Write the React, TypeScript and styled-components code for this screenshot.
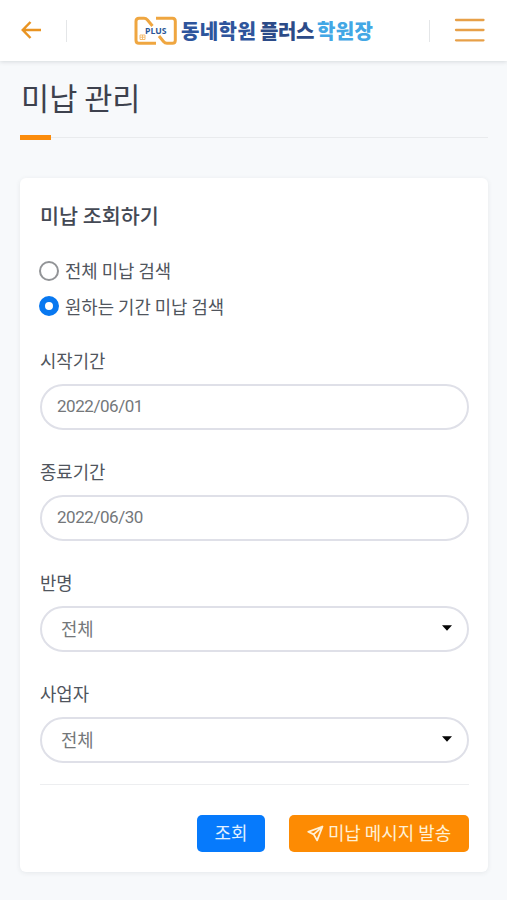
import React from "react";
import styled, { createGlobalStyle } from "styled-components";

const GlobalStyle = createGlobalStyle`
  *, *::before, *::after { box-sizing: border-box; }
  body {
    margin: 0;
    background: #f7f9fb;
    color: #50555d;
    font-family: "Noto Sans CJK KR", sans-serif;
    font-size: 17.8px;
  }
  h1, h2 { margin: 0; }
`;

const Page = styled.div`
  min-height: 900px;
`;

const Header = styled.header`
  display: flex;
  align-items: center;
  justify-content: space-between;
  height: 61px;
  padding: 0 22px 1px 20px;
  background: #fff;
  box-shadow: 0 1px 4px rgba(60, 70, 80, 0.17);
`;

const HeaderSide = styled.div`
  display: flex;
  align-items: center;
  gap: 24px;
`;

const IconButton = styled.button`
  display: flex;
  padding: 0;
  border: 0;
  background: none;
`;

const Divider = styled.span`
  width: 1px;
  height: 22px;
  margin-top: 2px;
  background: #e4e6e8;
`;

const Logo = styled.div`
  display: flex;
  align-items: center;
  gap: 4px;
  margin-left: 12px;
  padding-top: 1px;
`;

const Wordmark = styled.div`
  display: flex;
  line-height: 28px;
  font-size: 20px;
  font-weight: 900;
`;

const Word = styled.span<{ $width: number; $spacing: number; $color: string }>`
  width: ${(p) => p.$width}px;
  letter-spacing: ${(p) => p.$spacing}px;
  color: ${(p) => p.$color};
  white-space: nowrap;
`;

const Main = styled.main`
  padding: 0 19px 0 20px;
`;

const TitleBar = styled.div`
  height: 77px;
  padding: 14px 0 0 1px;
  border-bottom: 1px solid #e9ebed;
`;

const Title = styled.h1`
  font-size: 30.6px;
  line-height: 44px;
  font-weight: 400;
  color: #3d414d;
`;

const Accent = styled.div`
  width: 31px;
  height: 5px;
  margin-top: -3px;
  background: #fb8c0c;
`;

const Card = styled.section`
  height: 694px;
  margin-top: 38px;
  padding: 19px 19px 0 20px;
  border-radius: 6px;
  background: #fff;
  box-shadow: 0 1px 5px rgba(50, 65, 80, 0.09);
`;

const CardTitle = styled.h2`
  margin-bottom: 20px;
  font-size: 20.7px;
  line-height: 36px;
  font-weight: 500;
  color: #444954;
`;

const RadioRow = styled.div`
  display: flex;
  align-items: center;
  gap: 5px;
  height: 35.5px;
  line-height: 35px;
`;

const RadioMark = styled.span<{ $checked?: boolean }>`
  width: 20px;
  height: 20px;
  margin: 0 1px 0 -1px;
  border-radius: 50%;
  border: ${(p) => (p.$checked ? "6px solid #0878f0" : "2px solid #929497")};
`;

const Fields = styled.div`
  display: flex;
  flex-direction: column;
  gap: 26px;
  margin-top: 21px;
`;

const Label = styled.div`
  height: 39px;
  line-height: 30px;
`;

const Control = styled.div<{ $select?: boolean }>`
  display: flex;
  align-items: center;
  justify-content: space-between;
  height: 46px;
  padding: ${(p) => (p.$select ? "0 14px 2px 19px" : "0 14px 3px 15px")};
  border: 2px solid #dfe0e8;
  border-radius: 23px;
  color: #74777a;
`;

const DateText = styled.span`
  font-family: Roboto, sans-serif;
  font-size: 17px;
  font-weight: 400;
  letter-spacing: -0.45px;
`;

const Footer = styled.div`
  display: flex;
  justify-content: flex-end;
  gap: 24px;
  margin-top: 21px;
  padding-top: 30px;
  border-top: 1px solid #edeef0;
`;

const Button = styled.button<{ $primary?: boolean }>`
  display: flex;
  align-items: center;
  justify-content: center;
  gap: 4px;
  width: ${(p) => (p.$primary ? 68 : 180)}px;
  height: 37px;
  padding: 0 0 3px;
  border: 0;
  border-radius: 5px;
  background: ${(p) => (p.$primary ? "#067afc" : "#fd8b03")};
  color: ${(p) => (p.$primary ? "#e1f0ff" : "#fff0d5")};
  font-family: inherit;
  font-size: 17.9px;
  white-space: nowrap;

  svg {
    margin-top: 3px;
  }
`;

const Caret = () => (
  <svg width="12" height="6" viewBox="0 0 12 6">
    <path d="M1 0.3h10L6 5.8z" fill="#050505" />
  </svg>
);

const fields = [
  { label: "시작기간", value: "2022/06/01" },
  { label: "종료기간", value: "2022/06/30" },
  { label: "반명", value: "전체", select: true },
  { label: "사업자", value: "전체", select: true },
];

export default function App() {
  return (
    <Page>
      <GlobalStyle />
      <Header>
        <HeaderSide>
          <IconButton aria-label="뒤로">
            <svg width="22" height="20" viewBox="0 0 22 20" fill="none" stroke="#e99422" strokeWidth="2.5">
              <path d="M21 10H3M10.5 2L2.8 10l7.7 8" />
            </svg>
          </IconButton>
          <Divider />
        </HeaderSide>
        <Logo>
          <svg width="43" height="30" viewBox="0 0 43 30" fill="none" stroke="#efa640" strokeWidth="3">
            <path d="M18.5 10L13.5 4Q12 2.3 10 2.3H5Q2 2.3 2 5.3V24.3Q2 27.3 5 27.3H22" />
            <path d="M22 2.3H38.5Q41.3 2.3 41.3 5.3V24.3Q41.3 27.3 38.5 27.3H33Q31 27.3 29.5 25.5L25 20" />
            <path d="M6 19h5v4.5H6zM6 21.2h5M8.5 19v4.5" stroke="#f4bd72" strokeWidth="1" />
            <text x="11" y="18.3" fill="#2b5797" stroke="none" fontFamily="Open Sans, sans-serif" fontSize="9.6" fontWeight="700" textLength="21.5" lengthAdjust="spacingAndGlyphs">PLUS</text>
          </svg>
          <Wordmark>
            <Word $width={79} $spacing={0.4} $color="#2e559c">동네학원</Word>
            <Word $width={57} $spacing={-0.4} $color="#2c4b88">플러스</Word>
            <Word $width={57} $spacing={0.4} $color="#43a7e5">학원장</Word>
          </Wordmark>
        </Logo>
        <HeaderSide>
          <Divider />
          <IconButton aria-label="메뉴">
            <svg width="31" height="26" viewBox="0 0 31 26" stroke="#e7a048" strokeWidth="2.3" strokeLinecap="round">
              <path d="M2 3h27.5M2 13h27.5M2 23.3h27.5" />
            </svg>
          </IconButton>
        </HeaderSide>
      </Header>
      <Main>
        <TitleBar><Title>미납 관리</Title></TitleBar>
        <Accent />
        <Card>
          <CardTitle>미납 조회하기</CardTitle>
          <RadioRow><RadioMark />전체 미납 검색</RadioRow>
          <RadioRow><RadioMark $checked />원하는 기간 미납 검색</RadioRow>
          <Fields>
            {fields.map((f) => (
              <div key={f.label}>
                <Label>{f.label}</Label>
                <Control $select={f.select}>
                  {f.select ? <span>{f.value}</span> : <DateText>{f.value}</DateText>}
                  {f.select && <Caret />}
                </Control>
              </div>
            ))}
          </Fields>
          <Footer>
            <Button $primary>조회</Button>
            <Button>
              <svg width="17" height="17" viewBox="0 0 17 17" fill="none" stroke="currentColor" strokeWidth="1.8" strokeLinejoin="round">
                <path d="M15.5 1.5L1.2 6.8l5.5 2.6 3.4 6zM15.5 1.5L6.7 9.4" />
              </svg>
              미납 메시지 발송
            </Button>
          </Footer>
        </Card>
      </Main>
    </Page>
  );
}
